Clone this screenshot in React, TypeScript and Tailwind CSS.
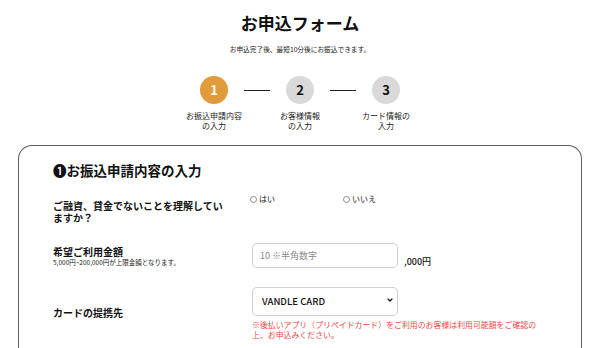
const steps = [
    { n: '1', label: ['お振込申請内容', 'の入力'], active: true },
    { n: '2', label: ['お客様情報', 'の入力'], active: false },
    { n: '3', label: ['カード情報の', '入力'], active: false },
];

const Radio = ({ label }: { label: string }) => (
    <label className="flex items-center gap-[2px] text-[8px] leading-[10px] text-[#222]">
        <span className="block h-[7px] w-[7px] rounded-full border border-[#8a8a8a] bg-white" />
        {label}
    </label>
);

export default function App() {
    return (
        <div className="flex min-h-screen w-full flex-col items-center bg-white font-['Noto_Sans_CJK_JP','Noto_Sans',sans-serif] text-[#111]">
            <h1 className="pt-[14px] text-[17px] font-bold leading-[18px]">お申込フォーム</h1>
            <p className="mt-[13px] text-[6.7px] leading-[8px] text-[#222]">お申込完了後、最短10分後にお振込できます。</p>

            <div className="mt-[23px] flex items-start gap-[16px]">
                {steps.map((s, i) => (
                    <div key={s.n} className="flex items-start gap-[16px]">
                        {i > 0 && <div className="mt-[14px] h-[1px] w-[26px] bg-[#222]" />}
                        <div className="flex w-[28px] flex-col items-center">
                            <div
                                className={
                                    s.active
                                        ? 'flex h-[28px] w-[28px] items-center justify-center rounded-full bg-[#e29b3a] text-[13px] font-bold text-white'
                                        : 'flex h-[28px] w-[28px] items-center justify-center rounded-full bg-[#d9d9d9] text-[13px] font-bold text-[#111]'
                                }
                            >
                                {s.n}
                            </div>
                            <p className="mt-[7px] whitespace-nowrap text-center text-[8px] leading-[10px] text-[#222]">
                                {s.label[0]}
                                <br />
                                {s.label[1]}
                            </p>
                        </div>
                    </div>
                ))}
            </div>

            <div className="mt-[14px] w-[564px] rounded-t-[14px] border border-b-0 border-[#5f5f5f] px-[34px] pt-[16px] pb-[20px]">
                <h2 className="text-[13.5px] font-bold leading-[16px]">❶お振込申請内容の入力</h2>

                <div className="mt-[22px] flex items-start">
                    <p className="w-[197px] text-[10px] font-bold leading-[11.5px]">
                        ご融資、貸金でないことを理解してい
                        <br />
                        ますか？
                    </p>
                    <div className="-mt-[6px] flex items-center gap-[68px]">
                        <Radio label="はい" />
                        <Radio label="いいえ" />
                    </div>
                </div>

                <div className="mt-[20px] flex items-start">
                    <div className="w-[199px] pt-[3px]">
                        <p className="text-[10px] font-bold leading-[12px]">希望ご利用金額</p>
                        <p className="text-[6.5px] leading-[8px] text-[#222]">5,000円~200,000円が上限金額となります。</p>
                    </div>
                    <div className="flex items-end gap-[6px]">
                        <input
                            type="text"
                            placeholder="10 ※半角数字"
                            className="h-[25px] w-[146px] rounded-[5px] border border-[#cfcfcf] px-[7px] text-[9px] outline-none placeholder:text-[#8a8a8a]"
                        />
                        <span className="mb-[1px] text-[9px] font-medium leading-[10px]">,000円</span>
                    </div>
                </div>

                <div className="mt-[18px] flex items-center">
                    <p className="w-[199px] text-[10px] font-bold leading-[12px]">カードの提携先</p>
                    <div>
                        <div className="relative h-[29px] w-[146px]">
                            <select className="h-full w-full appearance-none rounded-[5px] border border-[#cfcfcf] bg-white pl-[9px] text-[9.5px] font-medium text-[#111] outline-none">
                                <option>VANDLE CARD</option>
                            </select>
                            <svg className="pointer-events-none absolute right-[5px] top-[12px]" width="6" height="4" viewBox="0 0 6 4">
                                <path d="M0.6 0.6 L3 3 L5.4 0.6" fill="none" stroke="#111" strokeWidth="1.3" />
                            </svg>
                        </div>
                        <p className="mt-[5px] whitespace-nowrap text-[7.9px] leading-[10px] text-[#f04848]">
                            ※後払いアプリ（プリペイドカード）をご利用のお客様は利用可能額をご確認の
                            <br />
                            上、お申込みください。
                        </p>
                    </div>
                </div>
            </div>
        </div>
    );
}
